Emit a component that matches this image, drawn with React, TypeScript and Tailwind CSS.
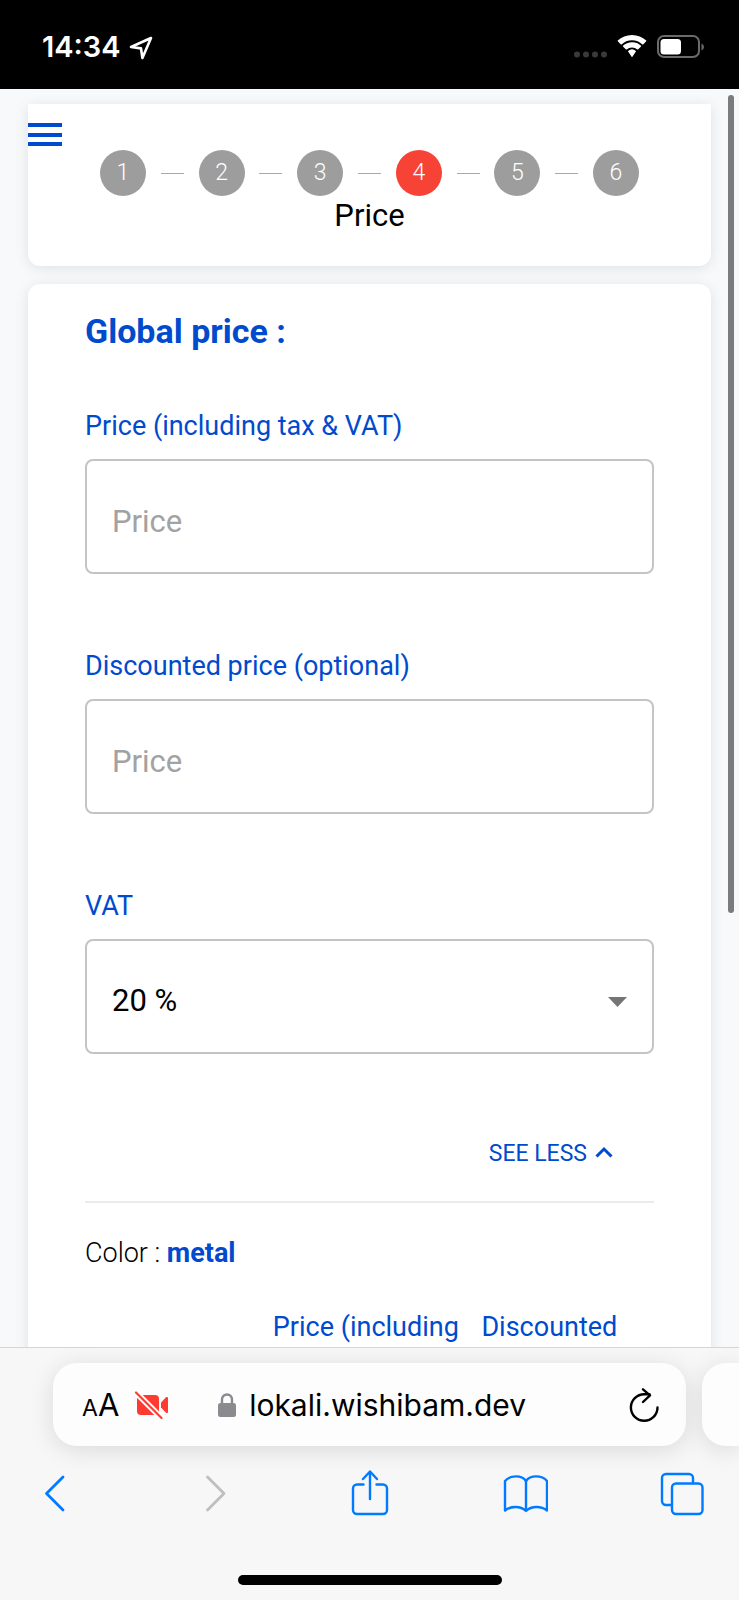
import { useState } from 'react';

const steps = [1, 2, 3, 4, 5, 6];
const activeStep = 4;

function StatusBar() {
  return (
    <header className="h-[89px] shrink-0 bg-black text-white flex items-center justify-between pl-[42px] pr-[34px]">
      <div className="flex items-center gap-2 text-[29px] leading-8 font-semibold font-['Inter',sans-serif]">
        <span className="pt-[5px]">14:34</span>
        <svg className="w-6 h-6 mt-[6px]" viewBox="0 0 24 24" fill="none" stroke="currentColor" strokeWidth="2.6" strokeLinejoin="round">
          <path d="M22 2 L13.4 22 L12 12.4 L2 11 Z" />
        </svg>
      </div>

      <div className="flex items-center gap-[10px] pt-1">
        <svg className="w-[33px] h-6" viewBox="0 0 33 24" fill="#3a3a3a">
          <circle cx="3" cy="19.500" r="3" />
          <circle cx="12" cy="19.500" r="3" />
          <circle cx="21" cy="19.500" r="3" />
          <circle cx="30" cy="19.500" r="3" />
        </svg>
        <svg className="w-[30px] h-6" viewBox="0 0 30 24" fill="currentColor">
          <path d="M15 5.2c4 0 7.700 1.600 10.400 4.200.2.200.5.200.7 0l3.100-3.100a.5.500 0 0 0 0-.700C25.500 2.100 20.500 0 15 0S4.500 2.100.8 5.600a.5.500 0 0 0 0 .700l3.100 3.100c.2.200.5.200.7 0C7.300 6.800 11 5.200 15 5.200Z" />
          <path d="M15 12.400c2 0 3.900.8 5.300 2 .2.200.5.200.7 0l3-3a.5.500 0 0 0 0-.700A13 13 0 0 0 15 7.300c-3.500 0-6.600 1.300-9 3.400a.5.500 0 0 0 0 .700l3 3c.2.200.5.200.7 0a8 8 0 0 1 5.300-2Z" />
          <path d="M18.900 16.600a.5.500 0 0 0 0-.700 6 6 0 0 0-7.800 0 .5.500 0 0 0 0 .700l3.500 5.200c.2.300.6.300.8 0Z" />
        </svg>
        <svg className="w-12 h-6" viewBox="0 0 48 24" fill="none">
          <rect x="1" y="1" width="41" height="21" rx="6" stroke="#6b6b6b" strokeWidth="2" />
          <rect x="3.500" y="4" width="20.500" height="15.500" rx="3.500" fill="#fff" />
          <path d="M44.500 8.500v7c3.200-1.400 3.200-5.600 0-7Z" fill="#6b6b6b" />
        </svg>
      </div>
    </header>
  );
}

function Stepper() {
  return (
    <section className="relative bg-white rounded-b-xl shadow-[0_2px_14px_rgba(0,0,0,0.1)] pt-[46px] pb-[30px]">
      <button type="button" aria-label="Menu" className="absolute left-0 top-[19px] w-[34px] h-[23px] flex flex-col justify-between">
        <span className="h-1 w-full bg-[#004bcd]" />
        <span className="h-1 w-full bg-[#004bcd]" />
        <span className="h-1 w-full bg-[#004bcd]" />
      </button>

      <ol className="flex items-center justify-between px-[72px]">
        {steps.map((step) => (
          <li key={step} className="contents">
            {step > 1 && <span className="w-[23px] h-px bg-[#a8a8a8]" />}
            <span
              className={`size-[46px] rounded-full flex items-center justify-center text-[23px] font-light text-white ${
                step === activeStep ? 'bg-[#f74336]' : 'bg-[#9d9d9d]'
              }`}
            >
              {step}
            </span>
          </li>
        ))}
      </ol>
      <p className="text-center text-[31px] leading-10 text-black">Price</p>
    </section>
  );
}

function PriceField({ id, label }: { id: string; label: string }) {
  return (
    <div className="flex flex-col gap-[17px]">
      <label htmlFor={id} className="text-[27px] leading-8 text-[#004bcd]">
        {label}
      </label>
      <input
        id={id}
        type="text"
        placeholder="Price"
        className="w-full h-[115px] pt-[10px] px-[25px] rounded-lg border-2 border-[#c4c4c4] bg-white text-[31px] text-black placeholder:text-[#a2a2a2] outline-none"
      />
    </div>
  );
}

function PriceForm() {
  const [open, setOpen] = useState(true);
  const [vat, setVat] = useState('20');

  return (
    <section className="bg-white rounded-t-xl shadow-[0_2px_14px_rgba(0,0,0,0.1)] px-[57px] pt-[27px] pb-10">
      <h1 className="text-[34px] leading-10 font-bold text-[#004bcd]">Global price :</h1>

      <div className="mt-[59px] flex flex-col gap-[76px]">
        <PriceField id="price" label="Price (including tax & VAT)" />
        <PriceField id="discounted" label="Discounted price (optional)" />

        <div className="flex flex-col gap-[17px]">
          <label htmlFor="vat" className="text-[27px] leading-8 text-[#004bcd]">
            VAT
          </label>
          <div className="relative">
            <select
              id="vat"
              value={vat}
              onChange={(e) => setVat(e.target.value)}
              className="w-full h-[115px] pt-[10px] px-[25px] rounded-lg border-2 border-[#c4c4c4] bg-white text-[31px] text-black appearance-none outline-none"
            >
              <option value="20">20 %</option>
            </select>
            <svg className="absolute right-[27px] top-[58px] w-[19px] h-[10px] pointer-events-none" viewBox="0 0 19 10" fill="#757575">
              <path d="M0 0h19l-9.500 10Z" />
            </svg>
          </div>
        </div>
      </div>

      <div className="mt-[86px] pr-[41px] flex justify-end">
        <button type="button" onClick={() => setOpen(!open)} className="flex items-center gap-2 text-[23px] leading-7 text-[#004bcd]">
          SEE LESS
          <svg className="w-[18px] h-3 mb-1" viewBox="0 0 18 12" fill="none" stroke="currentColor" strokeWidth="3">
            <path d="M1.500 10.500 9 3l7.500 7.500" />
          </svg>
        </button>
      </div>

      <hr className="mt-[33px] border-t-2 border-[#ebebeb]" />

      {open && (
        <>
          <p className="mt-[34px] text-[27px] leading-8 font-light text-black">
            Color : <strong className="font-bold text-[#004bcd]">metal</strong>
          </p>

          <table className="mt-[42px] w-full table-fixed text-left text-[27px] leading-8 text-[#004bcd]">
            <thead>
              <tr>
                <td className="w-[33%]" />
                <th scope="col" className="font-normal whitespace-nowrap">Price (including</th>
                <th scope="col" className="font-normal whitespace-nowrap pl-[18px]">Discounted</th>
              </tr>
            </thead>
          </table>
        </>
      )}
    </section>
  );
}

function AddressBar() {
  return (
    <div className="flex gap-4 pl-[53px] overflow-hidden pt-[15px] pb-6">
      <div className="flex-1 h-[83px] rounded-3xl bg-[#fdfdfd] shadow-[0_4px_24px_rgba(0,0,0,0.12)] flex items-center pl-[29px] pr-[27px] text-black font-['Inter',sans-serif]">
        <button type="button" aria-label="Page settings" className="flex items-baseline leading-10 pt-1">
          <span className="text-[23px]">A</span>
          <span className="text-[31px]">A</span>
        </button>
        <svg className="ml-4 w-[34px] h-7" viewBox="0 0 34 28" fill="#ff3a30">
          <rect x="2" y="4" width="22" height="20" rx="4" />
          <path d="M26 11.500 31 6.300c.8-.8 2-.4 2 .7v14c0 1.100-1.200 1.500-2 .7l-5-5.200Z" />
          <path d="M1 1.500 26.500 27" stroke="#fdfdfd" strokeWidth="6" />
          <path d="M1 1.500 26.500 27" stroke="#ff3a30" strokeWidth="2.200" strokeLinecap="round" />
        </svg>
        <div className="flex-1 flex items-center justify-center gap-[13px] pr-[54px]">
          <svg className="w-[18px] h-6 shrink-0" viewBox="0 0 18 24">
            <rect x="0" y="10" width="18" height="14" rx="2.500" fill="#8a8a8f" />
            <path d="M4 11V6.500a5 5 0 0 1 10 0V11" fill="none" stroke="#8a8a8f" strokeWidth="2.400" />
          </svg>
          <span className="text-[30px] leading-10">lokali.wishibam.dev</span>
        </div>
        <button type="button" aria-label="Reload">
          <svg className="w-[30px] h-[34px]" viewBox="0 0 30 34" fill="none" stroke="currentColor" strokeWidth="2.400" strokeLinecap="round" strokeLinejoin="round">
            <path d="M28.500 19.500A13.300 13.300 0 1 1 15.200 6.200h5.300" />
            <path d="M14 1.300 21 7.300 14 14" />
          </svg>
        </button>
      </div>
      <div className="w-[37px] h-[83px] rounded-l-3xl bg-[#fdfdfd] shadow-[0_4px_24px_rgba(0,0,0,0.12)]" />
    </div>
  );
}

function Toolbar() {
  return (
    <nav className="flex items-center justify-between pl-[31px] pr-[34px] text-[#007aff]">
      <button type="button" aria-label="Back">
        <svg className="size-[46px]" viewBox="0 0 46 46" fill="none" stroke="currentColor" strokeWidth="2.800" strokeLinecap="round" strokeLinejoin="round">
          <path d="M32 7 15.500 23.500 32 40" />
        </svg>
      </button>
      <button type="button" aria-label="Forward" className="text-[#bfbfbf]">
        <svg className="size-[46px]" viewBox="0 0 46 46" fill="none" stroke="currentColor" strokeWidth="2.800" strokeLinecap="round" strokeLinejoin="round">
          <path d="M19.500 7 36 23.500 19.500 40" />
        </svg>
      </button>
      <button type="button" aria-label="Share">
        <svg className="size-[46px]" viewBox="0 0 46 46" fill="none" stroke="currentColor" strokeWidth="2.400" strokeLinecap="round" strokeLinejoin="round">
          <path d="M18.500 14.500H12a4 4 0 0 0-4 4V40a4 4 0 0 0 4 4h26a4 4 0 0 0 4-4V18.500a4 4 0 0 0-4-4h-6.500" />
          <path d="M25 29V2M18 9l7-7.500 7 7.500" />
        </svg>
      </button>
      <button type="button" aria-label="Bookmarks">
        <svg className="size-[46px]" viewBox="0 0 46 46" fill="none" stroke="currentColor" strokeWidth="2.400" strokeLinejoin="round">
          <path d="M24 11C21.500 7.500 18 6.400 14 6.400S5.500 8 3 11v29.500c3-2.500 7-3.500 10.500-3.500S21 38 24 41c3-3 7-4 10.500-4s7.500 1 10.500 3.500V11c-2.500-3-7-4.600-11-4.600S26.500 7.500 24 11Z" />
          <path d="M24 11v30" />
        </svg>
      </button>
      <button type="button" aria-label="Tabs">
        <svg className="size-[46px]" viewBox="0 0 46 46" fill="none" stroke="currentColor" strokeWidth="2.400">
          <path d="M34 13.500V8a4 4 0 0 0-4-4H7a4 4 0 0 0-4 4v23a4 4 0 0 0 4 4h6" />
          <rect x="13" y="13.500" width="30.500" height="30.500" rx="4" />
        </svg>
      </button>
    </nav>
  );
}

export default function App() {
  return (
    <div className="h-screen flex flex-col bg-[#f8f9fb] font-['Roboto',sans-serif]">
      <StatusBar />

      <div className="relative flex-1 min-h-0">
        <main className="h-full overflow-y-auto [scrollbar-width:none] px-7 pt-[15px] flex flex-col gap-[18px]">
          <Stepper />
          <PriceForm />
        </main>
        {/* Scroll position thumb */}
        <div className="absolute right-[5px] top-[6px] w-[6px] h-[65%] rounded-full bg-[#7c7c7c]" />
      </div>

      <footer className="shrink-0 bg-[#f7f7f7] border-t border-[#d4d5d7]">
        <AddressBar />
        <Toolbar />
        <div className="mx-auto mt-[59px] mb-[15px] w-[264px] h-[10px] rounded-full bg-black" />
      </footer>
    </div>
  );
}
